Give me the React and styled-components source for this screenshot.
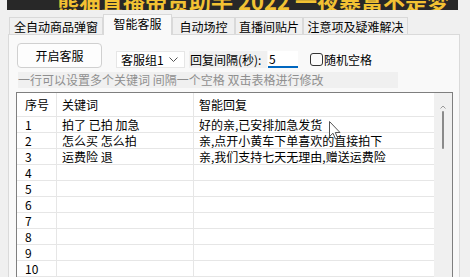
import React from 'react'
import styled, { createGlobalStyle } from 'styled-components'

const GlobalStyle = createGlobalStyle`
  html, body {
    margin: 0;
    padding: 0;
    background: #f0f0f0;
  }
  body {
    font-family: "Noto Sans CJK SC", "Liberation Sans", sans-serif;
    font-size: 12px;
    color: #000;
  }
`

const Window = styled.div`
  position: relative;
  width: 470px;
  height: 277px;
  overflow: hidden;
  background: #f0f0f0;
`

const Banner = styled.div`
  margin-left: 7px;
  width: 451px;
  height: 10px;
  overflow: hidden;
  background: #282828;
`

const BannerText = styled.div`
  margin-top: -12px;
  padding-left: 50px;
  font-size: 22px;
  line-height: 24px;
  font-weight: 700;
  color: #f2c233;
  white-space: nowrap;
`

const TabBar = styled.div`
  display: flex;
  align-items: flex-end;
  height: 20px;
  margin: 4px 0 0 9px;
  position: relative;
  z-index: 1;
`

const Tab = styled.div`
  box-sizing: border-box;
  width: ${(p) => p.$w}px;
  height: ${(p) => (p.$active ? 21 : 17)}px;
  margin-bottom: ${(p) => (p.$active ? -1 : 0)}px;
  border: 1px solid #d9d9d9;
  border-bottom: none;
  background: ${(p) => (p.$active ? '#f9f9f9' : '#f0f0f0')};
  text-align: center;
  line-height: 18px;
  white-space: nowrap;
`

const Panel = styled.div`
  box-sizing: border-box;
  margin-left: 8px;
  width: 452px;
  height: 260px;
  border: 1px solid #dadada;
  background: #f9f9f9;
  padding: 8px 0 0 8px;
`

const Toolbar = styled.div`
  display: flex;
  align-items: flex-end;
  height: 25px;
`

const Button = styled.div`
  box-sizing: border-box;
  width: 85px;
  height: 25px;
  border: 1px solid #d0d0d0;
  border-radius: 4px;
  background: #fdfdfd;
  display: flex;
  align-items: center;
  justify-content: center;
`

const Combo = styled.div`
  box-sizing: border-box;
  margin-left: 14px;
  width: 69px;
  height: 17px;
  padding: 0 6px 0 4px;
  background: #fff;
  border: 1px solid #e6e6e6;
  display: flex;
  align-items: center;
  justify-content: space-between;
  line-height: 15px;
`

const Label = styled.div`
  margin-left: 4px;
  width: 78px;
  height: 17px;
  line-height: 17px;
  background: #f0f0f0;
  white-space: nowrap;
  padding-left: 1px;
  box-sizing: border-box;
`

const Input = styled.div`
  box-sizing: border-box;
  width: 30px;
  height: 17px;
  margin-left: 1px;
  background: #fff;
  border-bottom: 2px solid #0067c0;
  line-height: 15px;
  padding-left: 1px;
`

const CheckWrap = styled.div`
  margin-left: 12px;
  height: 17px;
  display: flex;
  align-items: center;
  gap: 1px;
`

const CheckBox = styled.div`
  box-sizing: border-box;
  width: 13px;
  height: 13px;
  border: 1px solid #333;
  border-radius: 3px;
  background: #fbfbfb;
`

const Hint = styled.div`
  margin: 4px 0 0 1px;
  width: 380px;
  height: 16px;
  line-height: 16px;
  background: #f0f0f0;
  color: #8f8f8f;
  white-space: nowrap;
`

const Table = styled.div`
  box-sizing: border-box;
  margin: 4px 0 0 -1px;
  width: 437px;
  height: 200px;
  border: 1px solid #7f7f7f;
  background: #fff;
  display: flex;
`

const Grid = styled.div`
  flex: 1;
`

const Row = styled.div`
  display: grid;
  grid-template-columns: 40px 137px 1fr;
  height: ${(p) => (p.$head ? 24 : 16)}px;
`

const Cell = styled.div`
  box-sizing: border-box;
  border-right: ${(p) => (p.$last ? 'none' : '1px solid #e6e6e6')};
  border-bottom: 1px solid #e6e6e6;
  padding-left: ${(p) => (p.$first ? 8 : 5)}px;
  display: flex;
  align-items: center;
  white-space: nowrap;
  overflow: hidden;
`

const ScrollBar = styled.div`
  width: 18px;
  background: #f0f0f0;
  display: flex;
  flex-direction: column;
  align-items: center;
`

const Thumb = styled.div`
  margin-top: 2px;
  width: 2px;
  height: 38px;
  border-radius: 1px;
  background: #8a8a8a;
`

const Cursor = styled.svg`
  position: absolute;
  left: 329px;
  top: 121px;
`

const rows = [
  ['1', '拍了 已拍 加急', '好的亲,已安排加急发货'],
  ['2', '怎么买 怎么拍', '亲,点开小黄车下单喜欢的直接拍下'],
  ['3', '运费险 退', '亲,我们支持七天无理由,赠送运费险'],
  ['4', '', ''],
  ['5', '', ''],
  ['6', '', ''],
  ['7', '', ''],
  ['8', '', ''],
  ['9', '', ''],
  ['10', '', ''],
]

const tabs = [
  ['全自动商品弹窗', 94],
  ['智能客服', 69],
  ['自动场控', 63],
  ['直播间贴片', 68],
  ['注意项及疑难解决', 105],
]

export default function App() {
  return (
    <Window>
      <GlobalStyle />
      <Banner>
        <BannerText>熊猫直播带货助手 2022 一夜暴富不是梦</BannerText>
      </Banner>
      <TabBar>
        {tabs.map(([t, w], i) => (
          <Tab key={t} $w={w} $active={i === 1}>
            {t}
          </Tab>
        ))}
      </TabBar>
      <Panel>
        <Toolbar>
          <Button>开启客服</Button>
          <Combo>
            <span>客服组1</span>
            <svg width="9" height="5" viewBox="0 0 9 5">
              <polyline points="0.5,0.5 4.5,4.5 8.5,0.5" fill="none" stroke="#555" strokeWidth="1" />
            </svg>
          </Combo>
          <Label>回复间隔(秒):</Label>
          <Input>5</Input>
          <CheckWrap>
            <CheckBox />
            <span>随机空格</span>
          </CheckWrap>
        </Toolbar>
        <Hint>一行可以设置多个关键词 间隔一个空格 双击表格进行修改</Hint>
        <Table>
          <Grid>
            <Row $head>
              <Cell $first>序号</Cell>
              <Cell>关键词</Cell>
              <Cell $last>智能回复</Cell>
            </Row>
            {rows.map(([n, k, r]) => (
              <Row key={n}>
                <Cell $first>{n}</Cell>
                <Cell>{k}</Cell>
                <Cell $last>{r}</Cell>
              </Row>
            ))}
          </Grid>
          <ScrollBar>
            <svg width="6" height="4" viewBox="0 0 6 4" style={{ marginTop: 12 }}>
              <polyline points="0.5,3.5 3,1 5.5,3.5" fill="none" stroke="#9a9a9a" strokeWidth="1" />
            </svg>
            <Thumb />
          </ScrollBar>
        </Table>
      </Panel>
      <Cursor width="12" height="19" viewBox="0 0 12 19">
        <path d="M0.5 0.5 L0.5 15.5 L4 12.2 L6.5 18 L8.7 17 L6.3 11.5 L11 11.5 Z" fill="#fff" stroke="#555" strokeWidth="1" strokeLinejoin="round" />
      </Cursor>
    </Window>
  )
}
